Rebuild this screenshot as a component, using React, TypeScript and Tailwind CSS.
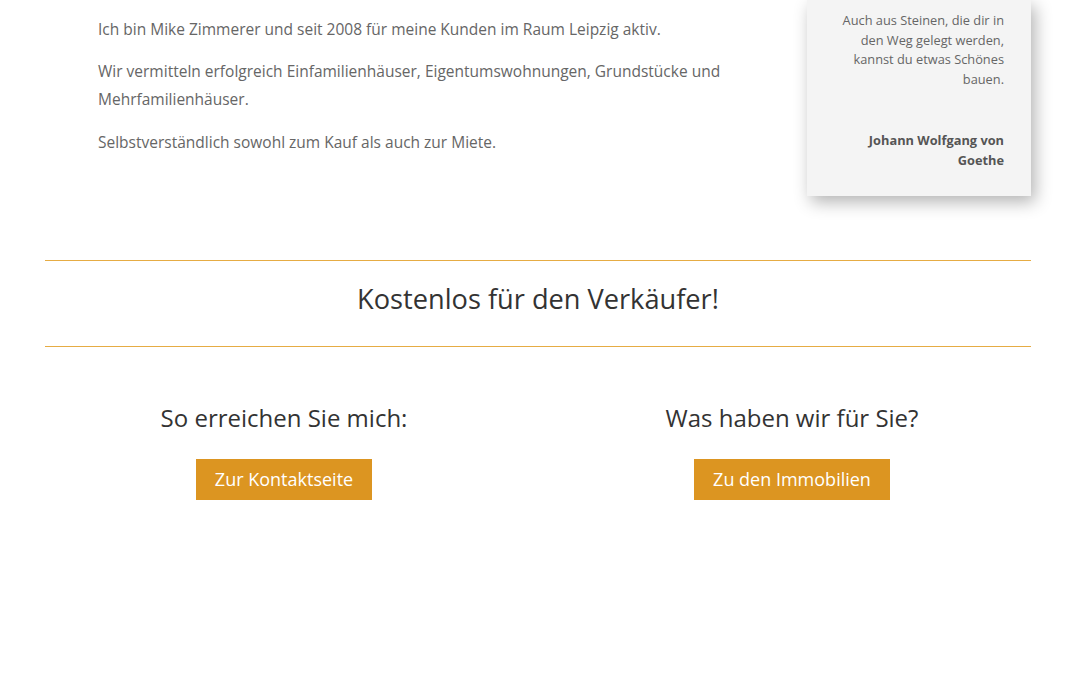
export default function App() {
  return (
    <div className="w-[1080px] h-[675px] overflow-hidden bg-white font-['Open_Sans',sans-serif]">
      <div className="mx-[45px] w-[986px]">
        {/* Intro row */}
        <div className="flex justify-between">
          <div className="ml-[53px] pt-[15px] w-[650px] text-[15.5px] leading-[28px] text-[#666]">
            <p className="mb-[14px]">Ich bin Mike Zimmerer und seit 2008 für meine Kunden im Raum Leipzig aktiv.</p>
            <p className="mb-[15px]">
              Wir vermitteln erfolgreich Einfamilienhäuser, Eigentumswohnungen, Grundstücke und Mehrfamilienhäuser.
            </p>
            <p>Selbstverständlich sowohl zum Kauf als auch zur Miete.</p>
          </div>
          <div className="w-[224px] h-[196px] bg-[#f4f4f4] shadow-[4px_6px_16px_rgba(0,0,0,0.3)] pt-[11px] pr-[27px] text-right text-[12.8px] leading-[19.5px] text-[#666]">
            <p className="pl-[30px]">Auch aus Steinen, die dir in den Weg gelegt werden, kannst du etwas Schönes bauen.</p>
            <p className="mt-[42px] pl-[40px] font-bold text-[#555]">Johann Wolfgang von Goethe</p>
          </div>
        </div>

        {/* Highlight */}
        <div className="mt-[64px] h-px bg-[#e6ac44]" />
        <div className="h-[85px] flex items-center justify-center pb-[10px]">
          <h2 className="text-[27.2px] text-[#333] leading-none">Kostenlos für den Verkäufer!</h2>
        </div>
        <div className="h-px bg-[#e6ac44]" />

        {/* Call to action */}
        <div className="mt-[55px] flex gap-[30px]">
          <div className="w-[478px] flex flex-col items-center">
            <h3 className="text-[24px] leading-[32px] text-[#333]">So erreichen Sie mich:</h3>
            <a className="mt-[25px] h-[41px] px-[19px] flex items-center bg-[#dc9521] text-white text-[18px]">Zur Kontaktseite</a>
          </div>
          <div className="w-[478px] flex flex-col items-center">
            <h3 className="text-[24px] leading-[32px] text-[#333]">Was haben wir für Sie?</h3>
            <a className="mt-[25px] h-[41px] px-[19px] flex items-center bg-[#dc9521] text-white text-[18px]">Zu den Immobilien</a>
          </div>
        </div>
      </div>
    </div>
  );
}
